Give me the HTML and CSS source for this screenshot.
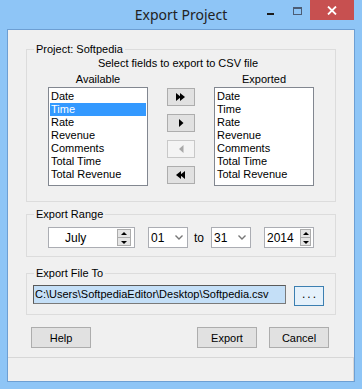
FILE: index.html
```html
<!DOCTYPE html>
<html lang="en">
<head>
    <meta charset="UTF-8">
    <title>Export Project</title>
    <link rel="stylesheet" href="styles.css">
</head>
<body>

<div class="window">
    <!-- Title bar -->
    <div class="titlebar">
        <span class="title">Export Project</span>
        <div class="caption-btns">
            <span class="cap-min"></span>
            <span class="cap-max"></span>
            <span class="cap-close">
                <svg width="10" height="9" viewBox="0 0 10 9"><path d="M1 0.5 L9 8.5 M9 0.5 L1 8.5" stroke="#fff" stroke-width="1.8"/></svg>
            </span>
        </div>
    </div>

    <div class="client">
        <div class="dialog-body">

            <!-- Fields -->
            <div class="group group-fields">
                <div class="group-title">Project: Softpedia</div>
                <div class="hint">Select fields to export to CSV file</div>
                <div class="picker">
                    <div class="col">
                        <div class="col-label">Available</div>
                        <ul class="listbox">
                            <li>Date</li>
                            <li class="selected">Time</li>
                            <li>Rate</li>
                            <li>Revenue</li>
                            <li>Comments</li>
                            <li>Total Time</li>
                            <li>Total Revenue</li>
                        </ul>
                    </div>
                    <div class="movers">
                        <button class="mover">
                            <svg width="10" height="8" viewBox="0 0 10 8"><path d="M0 0 L5 4 L0 8 Z M4 0 L9 4 L4 8 Z" fill="#000"/></svg>
                        </button>
                        <button class="mover">
                            <svg width="5" height="8" viewBox="0 0 5 8"><path d="M0 0 L4.5 4 L0 8 Z" fill="#000"/></svg>
                        </button>
                        <button class="mover disabled">
                            <svg width="5" height="8" viewBox="0 0 5 8"><path d="M4.5 0 L0 4 L4.5 8 Z" fill="#a8a8a8"/></svg>
                        </button>
                        <button class="mover">
                            <svg width="10" height="8" viewBox="0 0 10 8"><path d="M9 0 L4 4 L9 8 Z M5 0 L0 4 L5 8 Z" fill="#000"/></svg>
                        </button>
                    </div>
                    <div class="col">
                        <div class="col-label">Exported</div>
                        <ul class="listbox">
                            <li>Date</li>
                            <li>Time</li>
                            <li>Rate</li>
                            <li>Revenue</li>
                            <li>Comments</li>
                            <li>Total Time</li>
                            <li>Total Revenue</li>
                        </ul>
                    </div>
                </div>
            </div>

            <!-- Range -->
            <div class="group group-range">
                <div class="group-title">Export Range</div>
                <div class="range-row">
                    <div class="spinbox month">
                        <span class="spin-value">July</span>
                        <span class="spin-btns">
                            <span class="spin-up"></span>
                            <span class="spin-down"></span>
                        </span>
                    </div>
                    <div class="combo">
                        <span>01</span>
                        <svg width="8" height="5" viewBox="0 0 8 5"><path d="M0.5 0.5 L4 4 L7.5 0.5" fill="none" stroke="#777" stroke-width="1.4"/></svg>
                    </div>
                    <span class="to">to</span>
                    <div class="combo">
                        <span>31</span>
                        <svg width="8" height="5" viewBox="0 0 8 5"><path d="M0.5 0.5 L4 4 L7.5 0.5" fill="none" stroke="#777" stroke-width="1.4"/></svg>
                    </div>
                    <div class="spinbox year">
                        <span class="spin-value">2014</span>
                        <span class="spin-btns">
                            <span class="spin-up"></span>
                            <span class="spin-down"></span>
                        </span>
                    </div>
                </div>
            </div>

            <!-- File -->
            <div class="group group-file">
                <div class="group-title">Export File To</div>
                <div class="file-row">
                    <div class="path">C:\Users\SoftpediaEditor\Desktop\Softpedia.csv</div>
                    <button class="browse">...</button>
                </div>
            </div>

            <div class="actions">
                <button class="btn">Help</button>
                <span class="spacer"></span>
                <button class="btn">Export</button>
                <button class="btn">Cancel</button>
            </div>
        </div>

        <div class="statusbar"></div>
    </div>
</div>

</body>
</html>
```

FILE: styles.css
```css
/* Global */
body {
    margin: 0;
    background-color: #8ec5f6;
    font-family: "Liberation Sans", Arial, sans-serif;
    font-size: 11px;
    color: #000;
    overflow: hidden;
}

.window {
    width: 362px;
    height: 389px;
    display: flex;
    flex-direction: column;
}

/* Title bar */
.titlebar {
    position: relative;
    height: 29px;
    text-align: center;
}

.title {
    font-family: "Noto Sans", sans-serif;
    font-size: 14px;
    line-height: 29px;
    color: #222;
}

.caption-btns {
    position: absolute;
    top: 0;
    right: 8px;
    display: flex;
    align-items: flex-start;
}

.cap-min {
    width: 7px;
    height: 2px;
    margin: 13px 19px 0 0;
    background: #1c1c1c;
}

.cap-max {
    width: 7px;
    height: 5px;
    margin: 7px 8px 0 0;
    border: 1px solid #4b5c75;
    border-top-width: 2px;
}

.cap-close {
    width: 44px;
    height: 20px;
    background: #c75050;
    display: flex;
    align-items: center;
    justify-content: center;
}

/* Client area */
.client {
    flex: 1;
    margin: 0 7px 7px 7px;
    border: 1px solid #6d9fd3;
    background: #f0f0f0;
    display: flex;
    flex-direction: column;
}

.dialog-body {
    padding: 19px 18px 0;
}

.group {
    border: 1px solid #dcdcdc;
}

.group-title {
    width: max-content;
    margin: -7px 0 0 7px;
    padding: 0 2px;
    line-height: 13px;
    background: #f0f0f0;
}

/* Fields group */
.group-fields {
    padding-bottom: 15px;
}

.hint {
    margin-top: 1px;
    line-height: 13px;
    text-align: center;
    padding-right: 6px;
}

.picker {
    display: grid;
    grid-template-columns: 100px 28px 100px;
    column-gap: 19px;
    padding-left: 21px;
    margin-top: 3px;
}

.col-label {
    line-height: 13px;
    text-align: center;
    height: 14px;
}

.listbox {
    list-style: none;
    margin: 0;
    padding: 1px;
    height: 95px;
    border: 1px solid #828790;
    background: #fff;
}

.listbox li {
    line-height: 13px;
    padding-left: 1px;
}

.listbox li:first-child {
    margin-top: 1px;
}

.listbox .selected {
    background: #3399ff;
    color: #fff;
}

.movers {
    display: flex;
    flex-direction: column;
    gap: 8px;
    padding-top: 15px;
}

.mover {
    width: 28px;
    height: 18px;
    padding: 0;
    border: 1px solid #adadad;
    background: #e1e1e1;
    display: flex;
    align-items: center;
    justify-content: center;
}

.mover.disabled {
    border-color: #c8c8c8;
    background: #f4f4f4;
}

/* Range group */
.group-range {
    margin-top: 12px;
    padding-bottom: 8px;
}

.range-row {
    display: flex;
    align-items: center;
    margin-top: 6px;
    padding-left: 21px;
}

.spinbox {
    height: 21px;
    box-sizing: border-box;
    border: 1px solid #abadb3;
    background: #fff;
    display: flex;
    align-items: center;
}

.spinbox.month {
    width: 87px;
    padding-left: 16px;
}

.spinbox.year {
    width: 50px;
    padding-left: 2px;
    margin-left: 13px;
}

.spin-value {
    flex: 1;
    font-size: 12px;
}

.spin-btns {
    display: flex;
    flex-direction: column;
    height: 17px;
    margin-right: 3px;
}

.month .spin-btns {
    width: 14px;
}

.year .spin-btns {
    width: 11px;
    margin-right: 2px;
}

.spin-up,
.spin-down {
    flex: 1;
    border: 1px solid #acacac;
    background: #e5e5e5;
    position: relative;
}

.spin-up {
    border-bottom: none;
}

.spin-up::after,
.spin-down::after {
    content: "";
    position: absolute;
    left: 50%;
    top: 50%;
    margin-left: -3px;
    border-left: 3px solid transparent;
    border-right: 3px solid transparent;
}

.spin-up::after {
    margin-top: -2px;
    border-bottom: 3px solid #000;
}

.spin-down::after {
    margin-top: -1px;
    border-top: 3px solid #000;
}

.combo {
    width: 40px;
    height: 21px;
    box-sizing: border-box;
    border: 1px solid #abadb3;
    background: #fff;
    margin-left: 13px;
    padding: 0 4px 0 2px;
    display: flex;
    align-items: center;
    justify-content: space-between;
    font-size: 12px;
}

.combo + .to {
    margin-left: 6px;
    font-size: 12px;
}

.to + .combo {
    margin-left: 7px;
}

/* File group */
.group-file {
    margin-top: 16px;
    padding-bottom: 8px;
}

.file-row {
    display: flex;
    align-items: flex-start;
    margin-top: 5px;
    padding-left: 6px;
}

.path {
    width: 253px;
    height: 19px;
    box-sizing: border-box;
    border: 1px solid #7a7a7a;
    border-top-color: #5a5a5a;
    border-left-color: #5a5a5a;
    background: #c4dff7;
    line-height: 17px;
    padding-left: 1px;
    font-size: 11px;
    white-space: nowrap;
    overflow: hidden;
}

.browse {
    width: 30px;
    height: 20px;
    margin: 1px 0 0 8px;
    padding: 0 0 4px;
    border: 1px solid #3c7fb1;
    background: #e5f1fb;
    font-family: "Liberation Sans", Arial, sans-serif;
    font-size: 12px;
    letter-spacing: 2px;
    text-indent: 2px;
}

/* Bottom buttons */
.actions {
    display: flex;
    gap: 12px;
    margin-top: 12px;
    padding: 0 7px 0 5px;
}

.spacer {
    flex: 1;
}

.btn {
    width: 60px;
    height: 21px;
    padding: 0;
    border: 1px solid #adadad;
    background: #e1e1e1;
    font-family: "Liberation Sans", Arial, sans-serif;
    font-size: 11px;
    color: #000;
}

.statusbar {
    flex: 1;
    margin-top: 9px;
    border-top: 1px solid #d7d7d7;
    border-right: 1px solid #d7d7d7;
}
```
